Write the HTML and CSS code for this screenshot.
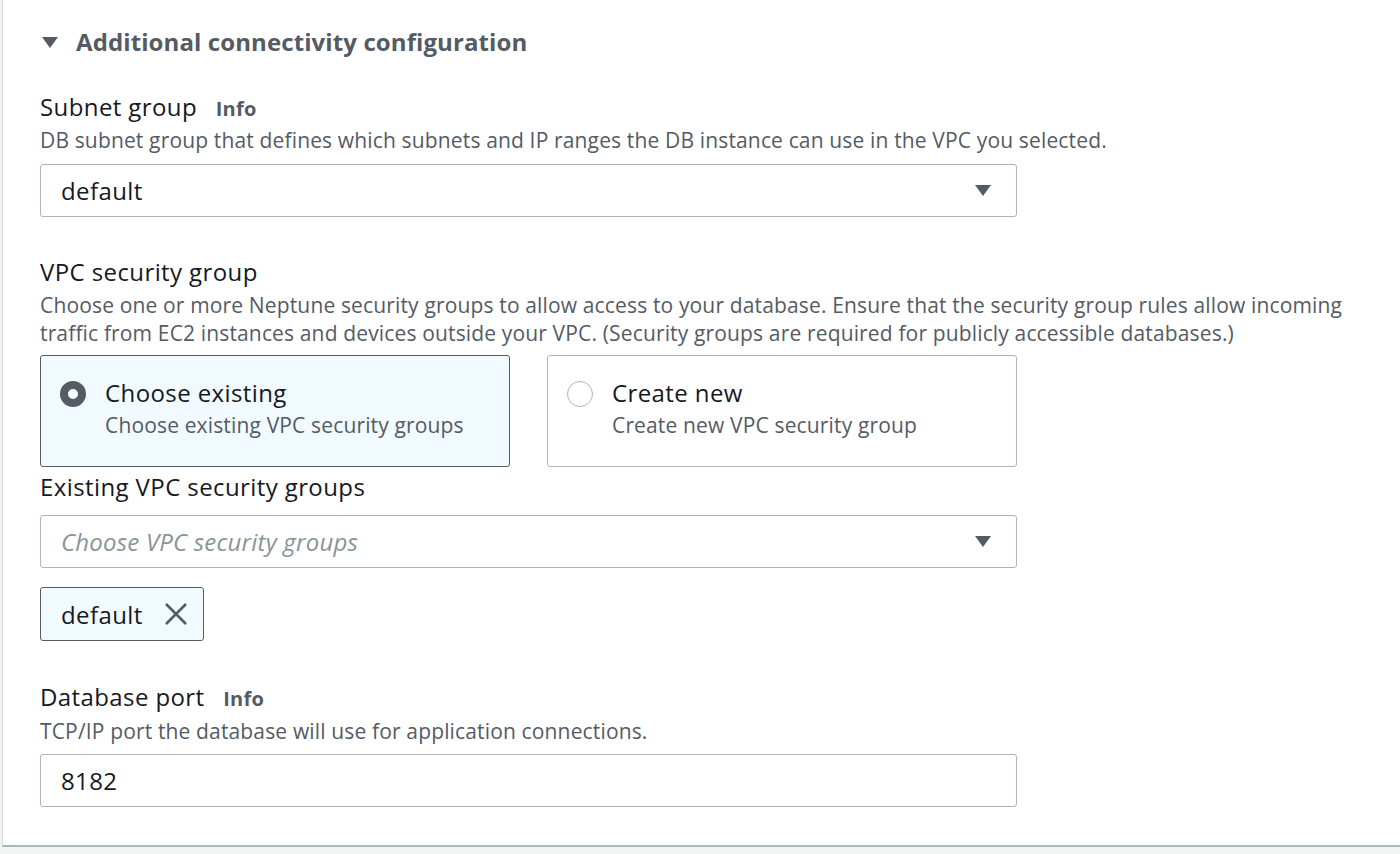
FILE: index.html
```html
<!DOCTYPE html>
<html lang="en">
<head>
<meta charset="utf-8">
<title>Additional connectivity configuration</title>
<link rel="stylesheet" href="styles.css">
</head>
<body>
<div class="panel">
  <div class="section-head">
    <svg class="caret-down" width="18" height="13" viewBox="0 0 18 13"><path d="M1 1 H17 L9 12 Z" fill="#545b64"/></svg>
    <span class="section-title">Additional connectivity configuration</span>
  </div>

  <div class="field first">
    <div class="label">Subnet group <span class="info">Info</span></div>
    <div class="desc">DB subnet group that defines which subnets and IP ranges the DB instance can use in the VPC you selected.</div>
    <div class="select">
      <span class="value">default</span>
      <svg class="arrow" width="18" height="13" viewBox="0 0 18 13"><path d="M1 1 H17 L9 12 Z" fill="#545b64"/></svg>
    </div>
  </div>

  <div class="field">
    <div class="label">VPC security group</div>
    <div class="desc">Choose one or more Neptune security groups to allow access to your database. Ensure that the security group rules allow incoming traffic from EC2 instances and devices outside your VPC. (Security groups are required for publicly accessible databases.)</div>
    <div class="tiles">
      <div class="tile selected">
        <span class="radio checked"></span>
        <div class="tile-text">
          <div class="tile-title">Choose existing</div>
          <div class="tile-desc">Choose existing VPC security groups</div>
        </div>
      </div>
      <div class="tile">
        <span class="radio"></span>
        <div class="tile-text">
          <div class="tile-title">Create new</div>
          <div class="tile-desc">Create new VPC security group</div>
        </div>
      </div>
    </div>
    <div class="label sub">Existing VPC security groups</div>
    <div class="select multi">
      <span class="placeholder">Choose VPC security groups</span>
      <svg class="arrow" width="18" height="13" viewBox="0 0 18 13"><path d="M1 1 H17 L9 12 Z" fill="#545b64"/></svg>
    </div>
    <div class="token">
      <span class="token-text">default</span>
      <svg class="token-x" width="24" height="24" viewBox="0 0 24 24"><path d="M2 2 L22 22 M22 2 L2 22" stroke="#545b64" stroke-width="2.6" fill="none"/></svg>
    </div>
  </div>

  <div class="field last">
    <div class="label">Database port <span class="info">Info</span></div>
    <div class="desc">TCP/IP port the database will use for application connections.</div>
    <div class="input"><span class="value">8182</span></div>
  </div>
</div>
</body>
</html>
```

FILE: styles.css
```css
html, body {
  margin: 0;
  padding: 0;
  background: #f2f3f3;
  font-family: "Open Sans", "Noto Sans", sans-serif;
  color: #16191f;
}

.panel {
  margin-left: 2px;
  width: 1389px;
  background: #ffffff;
  border: 1px solid #d5dbdb;
  border-top: none;
  border-bottom: 2px solid #aab7b8;
  padding: 26px 0 38px 37px;
  box-sizing: content-box;
}

.section-head {
  display: flex;
  align-items: center;
  height: 32px;
  gap: 17px;
}

.caret-down {
  display: block;
  margin-left: 1px;
}

.section-title {
  font-weight: 700;
  font-size: 24px;
  letter-spacing: 0.1px;
  color: #545b64;
  line-height: 32px;
}

.field {
  margin-top: 40px;
  width: 977px;
}

.field.first {
  margin-top: 34px;
}

.field.last {
  margin-top: 41px;
}

.label {
  font-size: 24px;
  line-height: 30px;
  height: 30px;
  letter-spacing: 0.4px;
  color: #16191f;
}

.label.sub {
  margin-top: 5px;
}

.info {
  font-size: 20px;
  line-height: 1;
  font-weight: 700;
  letter-spacing: 0.3px;
  color: #545b64;
  margin-left: 12px;
}

.desc {
  font-size: 21px;
  line-height: 28px;
  letter-spacing: 0.15px;
  color: #545b64;
  margin-top: 4px;
  width: 1330px;
}

.field.last .desc {
  margin-top: 5px;
}

.select, .input {
  margin-top: 10px;
  height: 53px;
  border: 1px solid #aab7b8;
  border-radius: 3px;
  box-sizing: border-box;
  display: flex;
  align-items: center;
  justify-content: space-between;
  padding: 0 24px 0 20px;
}

.select.multi {
  margin-top: 13px;
}

.value {
  font-size: 24px;
  letter-spacing: 0.4px;
  color: #16191f;
}

.placeholder {
  font-size: 24px;
  font-style: italic;
  letter-spacing: 0.2px;
  color: #879596;
}

.arrow {
  display: block;
}

.tiles {
  display: flex;
  gap: 37px;
  margin-top: 8px;
}

.tile {
  flex: 1;
  height: 112px;
  box-sizing: border-box;
  border: 1px solid #aab7b8;
  border-radius: 3px;
  display: flex;
  align-items: flex-start;
  padding: 22px 19px 0 19px;
  gap: 19px;
}

.tile.selected {
  background: #f1faff;
  border-color: #545b64;
}

.radio {
  flex: none;
  width: 26px;
  height: 26px;
  border-radius: 50%;
  border: 1.5px solid #aab7b8;
  box-sizing: border-box;
  margin-top: 3px;
  background: #fff;
}

.radio.checked {
  border: 8px solid #545b64;
}

.tile-title {
  font-size: 24px;
  line-height: 30px;
  letter-spacing: 0.4px;
  color: #16191f;
}

.tile-desc {
  font-size: 21px;
  line-height: 28px;
  letter-spacing: 0.15px;
  color: #545b64;
  margin-top: 3px;
}

.token {
  margin-top: 19px;
  width: 164px;
  height: 54px;
  box-sizing: border-box;
  background: #f1faff;
  border: 1px solid #545b64;
  border-radius: 3px;
  display: flex;
  align-items: center;
  padding-left: 20px;
  gap: 21px;
}

.token-text {
  font-size: 24px;
  letter-spacing: 0.4px;
  color: #16191f;
}

.token-x {
  display: block;
}

.input {
  margin-top: 9px;
}
```
